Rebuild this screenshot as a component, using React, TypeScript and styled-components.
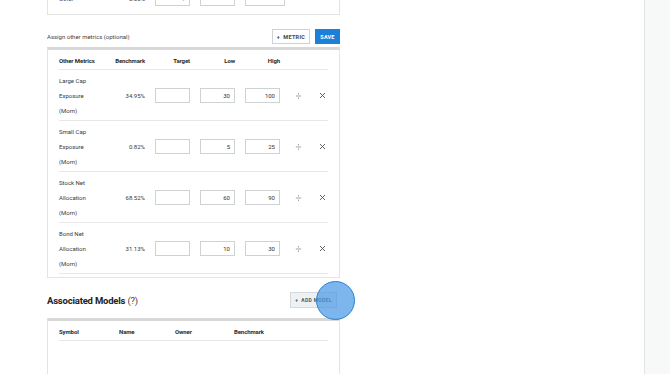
import styled, { createGlobalStyle } from "styled-components";

const GlobalStyle = createGlobalStyle`
  html, body {
    margin: 0;
    padding: 0;
    background: #ffffff;
    font-family: Roboto, "Liberation Sans", sans-serif;
    color: #333;
    overflow: hidden;
  }
`;

const metrics = [
  { name: ["Large Cap", "Exposure", "(Morn)"], bench: "34.95%", low: "30", high: "100" },
  { name: ["Small Cap", "Exposure", "(Morn)"], bench: "0.82%", low: "5", high: "25" },
  { name: ["Stock Net", "Allocation", "(Morn)"], bench: "68.52%", low: "60", high: "90" },
  { name: ["Bond Net", "Allocation", "(Morn)"], bench: "31.13%", low: "10", high: "30" },
];

function SortIcon() {
  return (
    <svg width="7" height="8" viewBox="0 0 7 8">
      <path d="M3.5 1 V2.4 M0.8 4 H6.2 M3.5 5.6 V7" stroke="#9a9a9a" strokeWidth="0.9" fill="none" />
    </svg>
  );
}

function CloseIcon() {
  return (
    <svg width="7" height="7" viewBox="0 0 7 7">
      <path d="M1 1 L6 6 M6 1 L1 6" stroke="#555" strokeWidth="0.9" fill="none" />
    </svg>
  );
}

function App() {
  return (
    <>
      <GlobalStyle />
      <Page>
        <Main>
          <Column>
            <TopCard>
              <MetricRow $short>
                <Label>Other</Label>
                <Bench>0.00%</Bench>
                <Field>
                  <Caret>▾</Caret>
                </Field>
                <Field />
                <Field $wide />
              </MetricRow>
            </TopCard>

            <SectionHead>
              <Caption>Assign other metrics (optional)</Caption>
              <Buttons>
                <OutlineButton>+&nbsp;&nbsp;METRIC</OutlineButton>
                <SaveButton>SAVE</SaveButton>
              </Buttons>
            </SectionHead>

            <Card>
              <MetricHeader>
                <HeadCell>Other Metrics</HeadCell>
                <HeadCell $right>Benchmark</HeadCell>
                <HeadCell $right>Target</HeadCell>
                <HeadCell $right>Low</HeadCell>
                <HeadCell $right>High</HeadCell>
              </MetricHeader>
              {metrics.map((m) => (
                <MetricRow key={m.name.join(" ")}>
                  <Label>
                    {m.name.map((line) => (
                      <div key={line}>{line}</div>
                    ))}
                  </Label>
                  <Bench>{m.bench}</Bench>
                  <Field />
                  <Field>{m.low}</Field>
                  <Field>{m.high}</Field>
                  <IconCell>
                    <SortIcon />
                  </IconCell>
                  <IconCell>
                    <CloseIcon />
                  </IconCell>
                </MetricRow>
              ))}
            </Card>

            <AssocHead>
              <Title>
                Associated Models <Help>(?)</Help>
              </Title>
              <AddButton>
                +&nbsp;&nbsp;ADD MODEL
                <Highlight />
              </AddButton>
            </AssocHead>

            <ModelsCard>
              <ModelsHeader>
                <HeadCell>Symbol</HeadCell>
                <HeadCell>Name</HeadCell>
                <HeadCell>Owner</HeadCell>
                <HeadCell>Benchmark</HeadCell>
              </ModelsHeader>
            </ModelsCard>
          </Column>
        </Main>
        <Sidebar />
      </Page>
    </>
  );
}

const Page = styled.div`
  display: flex;
  width: 670px;
  height: 374px;
  overflow: hidden;
`;

const Main = styled.div`
  flex: 1;
  padding-left: 47px;
`;

const Sidebar = styled.div`
  width: 25px;
  border-left: 1px solid #e2e4e6;
  background: #f7f8f8;
`;

const Column = styled.div`
  width: 293px;
  margin-top: -9px;
  display: flex;
  flex-direction: column;
`;

const Card = styled.div`
  border: 1px solid #e4e4e4;
  border-top: 3px solid #d8d8d8;
  padding: 0 11px 3px 11px;
  margin-top: 3px;
`;

const TopCard = styled.div`
  border: 1px solid #e4e4e4;
  border-top: none;
  padding: 0 11px 8px 11px;
`;

const MetricHeader = styled.div`
  display: grid;
  grid-template-columns: 46px 30px 35px 35px 35px 16px 13px;
  column-gap: 10px;
  align-items: center;
  height: 18px;
  padding-top: 1px;
  border-bottom: 1px solid #e8e8e8;
`;

const HeadCell = styled.div<{ $right?: boolean }>`
  font-size: 6px;
  font-weight: 700;
  color: #2a2a2a;
  letter-spacing: -0.1px;
  text-align: ${(p) => (p.$right ? "right" : "left")};
  white-space: nowrap;
`;

const MetricRow = styled.div<{ $short?: boolean }>`
  display: grid;
  grid-template-columns: 46px 30px 35px 35px 35px 16px 13px;
  column-gap: 10px;
  align-items: center;
  padding: ${(p) => (p.$short ? "0" : "3px 0 2px")};
  border-bottom: ${(p) => (p.$short ? "none" : "1px solid #e8e8e8")};
`;

const Label = styled.div`
  font-size: 6px;
  line-height: 15px;
  color: #3a3a3a;
  white-space: nowrap;
`;

const Bench = styled.div`
  font-size: 6px;
  color: #3a3a3a;
  text-align: right;
  white-space: nowrap;
`;

const Field = styled.div<{ $wide?: boolean }>`
  box-sizing: border-box;
  height: 15px;
  width: ${(p) => (p.$wide ? "40px" : "35px")};
  border: 1px solid #cfd2d4;
  font-size: 6px;
  color: #333;
  display: flex;
  align-items: center;
  justify-content: flex-end;
  padding-right: 4px;
  background: #fff;
`;

const Caret = styled.span`
  font-size: 5px;
  color: #777;
`;

const IconCell = styled.div`
  display: flex;
  justify-content: center;
  align-items: center;
`;

const SectionHead = styled.div`
  display: flex;
  justify-content: space-between;
  align-items: center;
  margin-top: 14px;
`;

const Caption = styled.div`
  font-size: 6px;
  color: #444;
`;

const Buttons = styled.div`
  display: flex;
  gap: 5px;
`;

const OutlineButton = styled.div`
  box-sizing: border-box;
  height: 15px;
  width: 38px;
  border: 1px solid #cfd2d4;
  background: #fff;
  font-size: 5.5px;
  font-weight: 700;
  letter-spacing: 0.3px;
  color: #444;
  display: flex;
  align-items: center;
  justify-content: center;
`;

const SaveButton = styled.div`
  height: 15px;
  width: 25px;
  background: #1d80d8;
  color: #fff;
  font-size: 5.5px;
  font-weight: 700;
  letter-spacing: 0.2px;
  display: flex;
  align-items: center;
  justify-content: center;
`;

const AssocHead = styled.div`
  display: flex;
  justify-content: space-between;
  align-items: center;
  margin-top: 14px;
  padding-right: 3px;
`;

const Title = styled.div`
  font-size: 9.5px;
  font-weight: 700;
  color: #222;
  letter-spacing: -0.2px;
`;

const Help = styled.span`
  font-weight: 400;
  color: #444;
`;

const AddButton = styled.div`
  position: relative;
  box-sizing: border-box;
  height: 16px;
  width: 47px;
  border: 1px solid #d3d8dc;
  background: #eef1f3;
  font-size: 5px;
  font-weight: 700;
  letter-spacing: 0.3px;
  color: #555;
  display: flex;
  align-items: center;
  justify-content: center;
`;

const Highlight = styled.div`
  position: absolute;
  left: 25px;
  top: -12px;
  width: 39px;
  height: 39px;
  box-sizing: border-box;
  border-radius: 50%;
  border: 1.5px solid #2b83d4;
  background: rgba(74, 154, 228, 0.72);
`;

const ModelsCard = styled.div`
  border: 1px solid #e4e4e4;
  border-top: 3px solid #d8d8d8;
  padding: 0 11px;
  margin-top: 10px;
  height: 120px;
`;

const ModelsHeader = styled.div`
  display: grid;
  grid-template-columns: 60px 56px 59px 1fr;
  align-items: center;
  height: 18px;
  padding-top: 1px;
  border-bottom: 1px solid #e8e8e8;
`;

export default App;
